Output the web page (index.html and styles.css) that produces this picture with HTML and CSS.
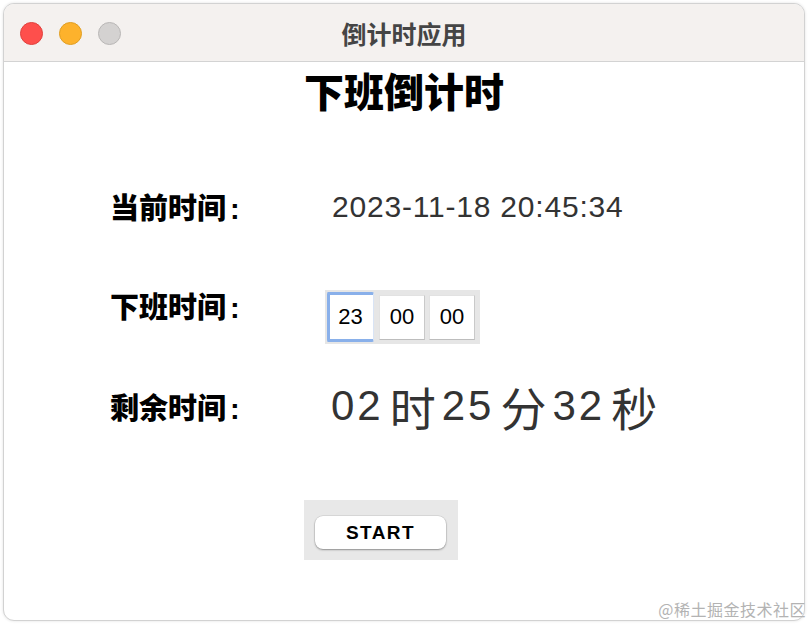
FILE: index.html
```html
<!DOCTYPE html>
<html lang="zh-CN">
<head>
<meta charset="utf-8">
<title>倒计时应用</title>
<link rel="stylesheet" href="styles.css">
</head>
<body>
<div class="window">
  <div class="titlebar">
    <div class="lights">
      <span class="light red"></span>
      <span class="light yellow"></span>
      <span class="light gray"></span>
    </div>
    <div class="title">倒计时应用</div>
    <div></div>
  </div>
  <div class="content">
    <h1 class="heading">下班倒计时</h1>
    <div class="rows">
      <div class="row row-now">
        <div class="label">当前时间<span class="colon">:</span></div>
        <div class="now">2023-11-18 20:45:34</div>
      </div>
      <div class="row row-off">
        <div class="label">下班时间<span class="colon">:</span></div>
        <div class="inputs">
          <div class="field focus">23</div>
          <div class="field">00</div>
          <div class="field">00</div>
        </div>
      </div>
      <div class="row row-left">
        <div class="label">剩余时间<span class="colon">:</span></div>
        <div class="remain"><span class="num">02</span><span class="unit">时</span><span class="num">25</span><span class="unit">分</span><span class="num">32</span><span class="unit">秒</span></div>
      </div>
      <div class="btn-frame">
        <button class="btn">START</button>
      </div>
    </div>
  </div>
</div>
<div class="watermark">@稀土掘金技术社区</div>
</body>
</html>
```

FILE: styles.css
```css
html, body {
  margin: 0;
  padding: 0;
  background: #ffffff;
}
body {
  width: 808px;
  height: 624px;
  position: relative;
  overflow: hidden;
  font-family: "Noto Sans CJK SC", "Liberation Sans", sans-serif;
}
.window {
  margin: 3px;
  width: 800px;
  height: 616px;
  border: 1px solid #d2d2d2;
  border-radius: 11px;
  box-shadow: 0 0 3px rgba(0,0,0,0.12);
  overflow: hidden;
  background: #ffffff;
}
.titlebar {
  height: 57px;
  background: #f4f1ef;
  border-bottom: 1px solid #d3d3d3;
  display: grid;
  grid-template-columns: 1fr auto 1fr;
  align-items: center;
}
.lights {
  display: flex;
  gap: 16px;
  padding-left: 16px;
  padding-top: 1px;
}
.light {
  width: 23px;
  height: 23px;
  border-radius: 50%;
  box-sizing: border-box;
}
.red { background: #fe4f4c; border: 1px solid #e0413d; }
.yellow { background: #fdb22c; border: 1px solid #e09e22; }
.gray { background: #d4d2d1; border: 1px solid #b9b7b6; }
.title {
  font-size: 25px;
  font-weight: 700;
  color: #454545;
  line-height: 30px;
}
.content {
  display: flex;
  flex-direction: column;
}
.heading {
  margin: 6px 0 0 0;
  text-align: center;
  font-size: 40px;
  line-height: 44px;
  font-weight: 900;
  color: #000;
}
.rows {
  padding-left: 106px;
  display: flex;
  flex-direction: column;
}
.row {
  display: flex;
  align-items: flex-start;
}
.label {
  width: 215px;
  font-size: 29px;
  font-weight: 900;
  color: #000;
  line-height: 36px;
  height: 40px;
  flex: none;
  white-space: nowrap;
}
.colon {
  font-family: "Liberation Sans", Arial, sans-serif;
  font-weight: 700;
  margin-left: 4px;
}
.row-now {
  margin-top: 76px;
  height: 40px;
}
.now {
  padding-left: 7px;
  font-family: "Liberation Sans", Arial, sans-serif;
  font-size: 30px;
  letter-spacing: 0.8px;
  line-height: 38px;
  color: #333;
}
.row-off {
  margin-top: 59px;
}
.inputs {
  margin-top: 3px;
  height: 54px;
  box-sizing: border-box;
  background: #e6e6e6;
  padding: 2px 5px 2px 2px;
  display: flex;
  align-items: center;
}
.field {
  box-sizing: border-box;
  width: 46px;
  height: 45px;
  background: #fff;
  border: 1px solid #e2e2e2;
  border-right-color: #c9c9c9;
  border-bottom-color: #bdbdbd;
  font-family: "Liberation Sans", Arial, sans-serif;
  font-size: 22px;
  color: #000;
  display: flex;
  align-items: center;
  justify-content: center;
  margin-left: 4px;
}
.field.focus {
  width: 47px;
  height: 50px;
  margin-left: 0;
  margin-right: 1px;
  border: 3px solid #89b0ea;
  border-right: 1px solid #d9e4f5;
  border-radius: 2px;
  padding-right: 2px;
}
.row-left {
  margin-top: 39px;
  height: 50px;
}
.row-left .label {
  line-height: 46px;
  height: 50px;
}
.remain {
  padding-left: 6px;
  height: 46px;
  display: flex;
  align-items: center;
  color: #333;
  white-space: nowrap;
}
.num {
  font-family: "Liberation Sans", Arial, sans-serif;
  font-size: 42px;
  letter-spacing: 3px;
  line-height: 46px;
}
.unit {
  font-family: "Noto Sans CJK SC", sans-serif;
  font-size: 46px;
  line-height: 46px;
  margin: 0 6px 0 6px;
}
.btn-frame {
  margin-top: 67px;
  margin-left: 194px;
  width: 154px;
  height: 60px;
  background: #e8e8e8;
  box-sizing: border-box;
  padding: 16px 12px 11px 11px;
}
.btn {
  display: block;
  width: 131px;
  height: 33px;
  padding: 0;
  border: none;
  border-radius: 8px;
  background: #fff;
  box-shadow: 0 1px 2px rgba(0,0,0,0.35), 0 0 0 0.5px rgba(0,0,0,0.12);
  font-family: "Liberation Sans", Arial, sans-serif;
  font-weight: 700;
  font-size: 19px;
  letter-spacing: 1.4px;
  color: #000;
  line-height: 33px;
}
.watermark {
  position: absolute;
  right: 2px;
  bottom: 4px;
  font-size: 16px;
  line-height: 22px;
  color: #b3b3b3;
  letter-spacing: 0.5px;
}
```
